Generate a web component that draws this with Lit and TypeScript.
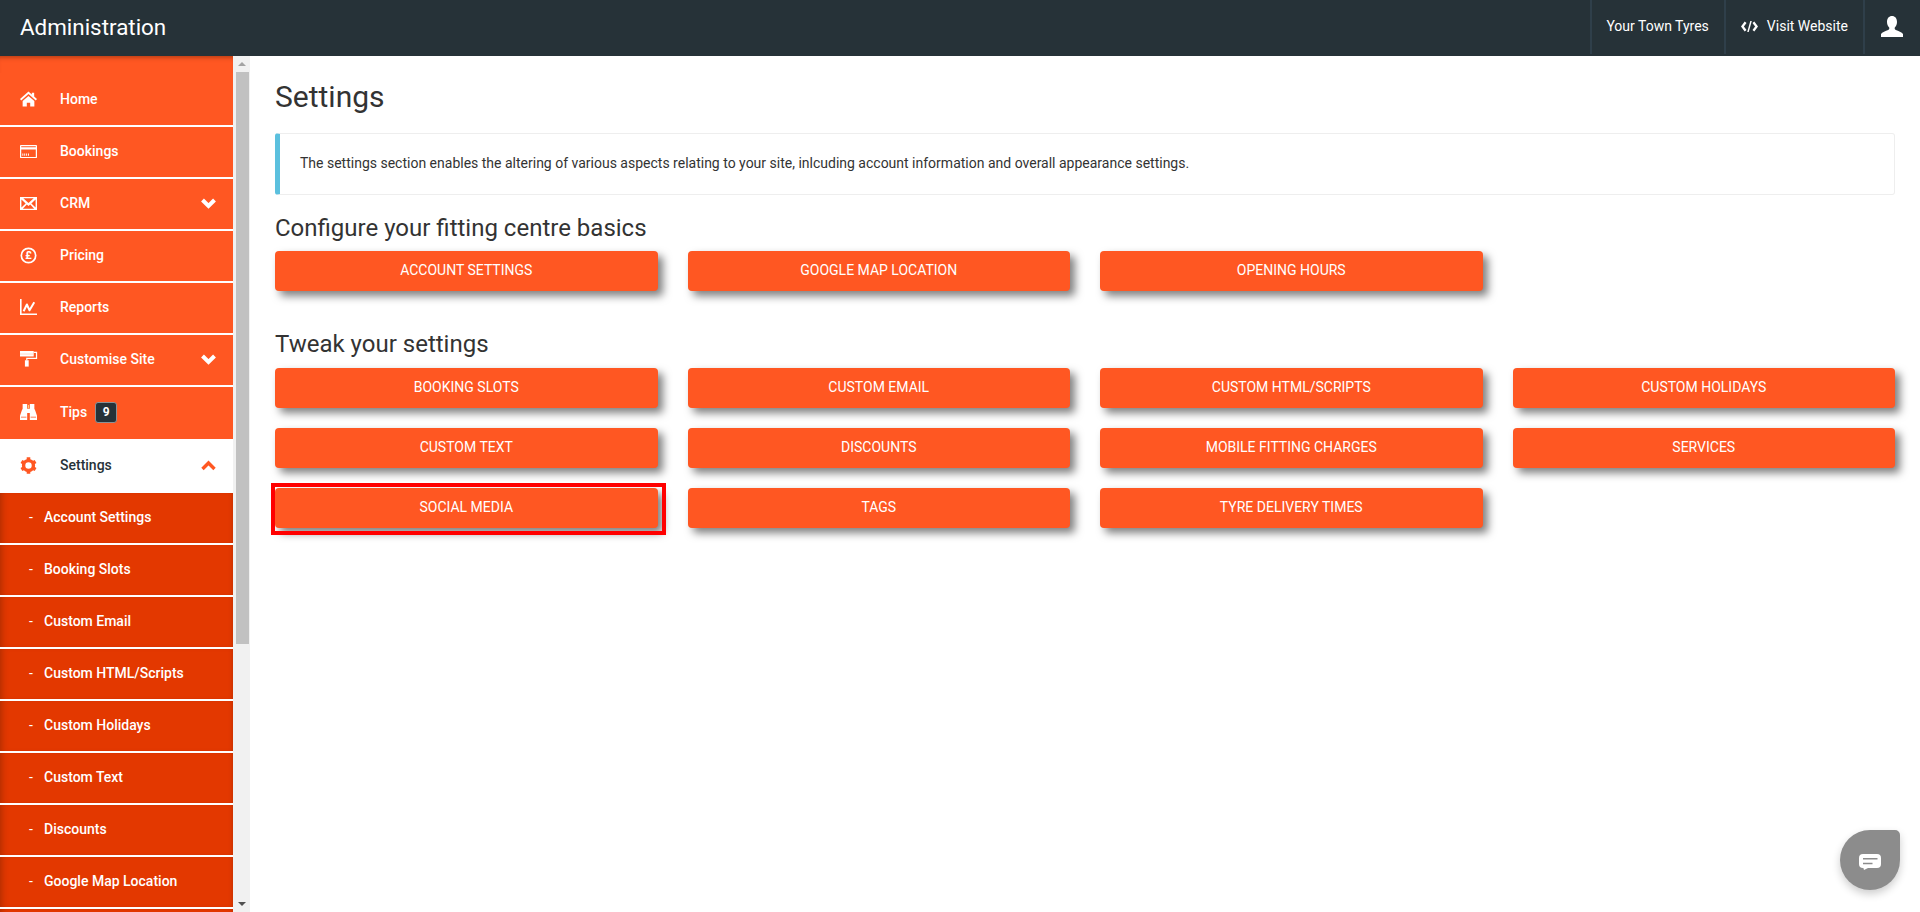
import { LitElement, html, css, svg } from "lit";
import { customElement } from "lit/decorators.js";

const O = "#ff5722";
const icons: Record<string, unknown> = {
  home: svg`<path d="M9 .500 0 8.600l1.300 1.500L9 3.300l7.700 6.800L18 8.600l-3-2.700V1.800h-2.500v1.900zM2.800 10.700v5.800h4.400v-4h3.600v4h4.400v-5.800L9 5.200z"/>`,
  card: svg`<path fill-rule="evenodd" d="M1 2h16a1 1 0 0 1 1 1v12a1 1 0 0 1-1 1H1a1 1 0 0 1-1-1V3a1 1 0 0 1 1-1zm.300 1.400v1.200h15.400V3.400zm0 3.400v7.900h15.400V6.800zM2.500 11h1v2.400h-1zm2 0h1v2.400h-1zm2 0h1v2.400h-1zm2 0h1v2.400h-1z"/>`,
  mail: svg`<path fill-rule="evenodd" d="M0 2h18v14H0zM3.500 3.500 9 8.400l5.500-4.900zM1.500 4.800v8.400L6 9zm15 0L12 9l4.500 4.200zM7.200 10.100 3 14.500h12l-4.200-4.400L9 11.700z"/>`,
  pound: svg`<circle cx="9" cy="9" r="7.600" fill="none" stroke="#fff" stroke-width="1.800"/><text x="9" y="13.200" text-anchor="middle" font-size="11.500" font-weight="700" font-family="Roboto, sans-serif" fill="#fff">£</text>`,
  chart: svg`<path d="M0 0h1.700v15.300H18V17H0z"/><path d="M3.800 13 7.300 5.800l2.800 6.200 5-8.500" fill="none" stroke="#fff" stroke-width="2.100" stroke-linejoin="round"/>`,
  roller: svg`<path d="M0 0h14.500v5.800H0z"/><path d="M0 2.800h14.500v.8H0z" fill="#ffc9b5"/><path d="M14.500 1.500H17.500V7.800H7.200V10" fill="none" stroke="#fff" stroke-width="1.300"/><path d="M5.200 9.800h4V16.500h-4z"/>`,
  bino: svg`<path d="M2.800 0H7.600V5H10.400V0h4.800v5l.9 2 1.900 5.500V17H10.400V9.500H7.600V17H0v-4.500L1.900 7l.9-2z"/><path fill="${O}" d="M1 13.400h5.800v.8H1zM11.200 13.400H17v.8h-5.800z"/><path fill="#ffd27a" d="M8.400 1h1.200v3.600H8.400z"/>`,
  cog: svg`<circle cx="9" cy="9" r="5.200" fill="none" stroke="${O}" stroke-width="3.600"/><g stroke="${O}" stroke-width="3.800"><path d="M9 .300v3M9 14.700v3M1.500 4.700l2.600 1.500M13.900 11.800l2.600 1.500M1.500 13.300l2.600-1.500M13.900 6.200l2.600-1.500"/></g>`,
};

interface Item { label: string; icon: string; chevron?: "down" | "up"; badge?: string; active?: boolean }

const NAV: Item[] = [
  { label: "Home", icon: "home" },
  { label: "Bookings", icon: "card" },
  { label: "CRM", icon: "mail", chevron: "down" },
  { label: "Pricing", icon: "pound" },
  { label: "Reports", icon: "chart" },
  { label: "Customise Site", icon: "roller", chevron: "down" },
  { label: "Tips", icon: "bino", badge: "9" },
  { label: "Settings", icon: "cog", chevron: "up", active: true },
];
const SUB = ["Account Settings", "Booking Slots", "Custom Email", "Custom HTML/Scripts", "Custom Holidays", "Custom Text", "Discounts", "Google Map Location"];
const BASICS = ["ACCOUNT SETTINGS", "GOOGLE MAP LOCATION", "OPENING HOURS"];
const TWEAKS = ["BOOKING SLOTS", "CUSTOM EMAIL", "CUSTOM HTML/SCRIPTS", "CUSTOM HOLIDAYS", "CUSTOM TEXT", "DISCOUNTS", "MOBILE FITTING CHARGES", "SERVICES", "SOCIAL MEDIA", "TAGS", "TYRE DELIVERY TIMES"];

@customElement("app-root")
export class AppRoot extends LitElement {
  static styles = css`
    :host { display: block; height: 912px; overflow: hidden; font-family: Roboto, "Liberation Sans", sans-serif; background: #fff; position: relative; }
    .top { height: 56px; background: #263238; color: #fff; display: flex; align-items: stretch; position: relative; z-index: 2; }
    .brand { flex: 1; padding-left: 20px; font-size: 22.400px; line-height: 54px; }
    .tlink { display: flex; align-items: center; gap: 9px; padding: 0 15px 2px 15px; box-sizing: border-box; font-size: 14px; font-weight: 400; border-left: 2px solid #2f3f4a; color: #fff; height: 54px; }
    .tlink.shop { padding-left: 14px; }
    .tlink svg { fill: #fff; display: block; flex: none; }
    .tuser { padding: 0 16px 0 15px; }
    .body { display: flex; height: 856px; }
    .sidewrap { width: 250px; flex: none; display: flex; overflow: hidden; }
    .side { width: 233px; flex: none; background: #fff; overflow: hidden; position: relative; }
    .side::before { content: ""; display: block; height: 17px; background: #ff5722; box-shadow: inset 0 5px 5px -4px rgba(90, 30, 0, .55); }
    .nav { display: flex; align-items: center; height: 50px; box-sizing: border-box; padding: 0 0 2px 20px; background: #ff5722; color: #fff; font-size: 14px; font-weight: 500; margin-bottom: 2px; position: relative; }
    .nav.first { height: 52px; padding-bottom: 0; }
    .nav.tips { height: 52px; margin-bottom: 0; }
    .nav.active { background: #fff; color: #263238; height: 54px; margin-bottom: 0; }
    .nav svg.ic { width: 17px; height: 17px; fill: #fff; flex: none; margin-right: 23px; display: block; overflow: visible; }
    .chev { position: absolute; right: 17px; top: 50%; margin-top: -7px; width: 15px; height: 12px; fill: none; stroke: #fff; stroke-width: 4; }
    .nav.active .chev { stroke: #ff5722; margin-top: -6px; stroke-width: 3.400; }
    .badge { margin-left: 8px; width: 22px; height: 21px; box-sizing: border-box; border: 1px solid #8a9296; border-radius: 3px; background: #263238; color: #fff; font-size: 12px; font-weight: 700; display: flex; align-items: center; justify-content: center; }
    .sub { display: flex; align-items: center; height: 50px; box-sizing: border-box; padding: 0 0 2px 29px; background: #e33800; color: #fff; font-size: 14px; font-weight: 500; margin-bottom: 2px; box-shadow: inset 6px 0 6px -4px rgba(90, 30, 0, .35), inset -4px 0 4px -4px rgba(90, 30, 0, .3); }
    .sub span { width: 15px; flex: none; font-weight: 400; }
    .scroll { width: 17px; flex: none; background: #f1f1f1; display: flex; flex-direction: column; align-items: center; }
    .scroll .arrow { height: 16px; width: 17px; flex: none; display: flex; align-items: center; justify-content: center; }
    .scroll .arrow i { display: block; width: 0; height: 0; border-left: 4px solid transparent; border-right: 4px solid transparent; }
    .scroll .up i { border-bottom: 4px solid #a3a3a3; }
    .scroll .down { margin-top: auto; }
    .scroll .down i { border-top: 4px solid #505050; }
    .thumb { width: 13px; height: 572px; background: #c1c1c1; margin-left: 1px; flex: none; }
    main { flex: 1; padding: 0 25px; min-width: 0; }
    h1 { font-size: 30px; font-weight: 400; color: #333; margin: 0; padding-top: 23px; line-height: 36px; }
    .callout { margin-top: 18px; height: 62px; box-sizing: border-box; border: 1px solid #eee; border-left: 5px solid #5bc0de; border-radius: 3px; padding: 0 20px 2px; display: flex; align-items: center; font-size: 14px; color: #333; }
    h3 { font-size: 24px; font-weight: 400; color: #333; margin: 0; line-height: 26px; }
    h3.a { margin-top: 20px; }
    h3.b { margin-top: 40px; }
    .grid { display: grid; grid-template-columns: repeat(4, 1fr); gap: 20px 30px; margin-top: 10px; }
    .grid.b { margin-top: 11px; }
    .btn { height: 40px; box-sizing: border-box; padding-bottom: 2px; background: #ff5722; border-radius: 4px; color: #fff; font-size: 14px; font-weight: 400; display: flex; align-items: center; justify-content: center; box-shadow: 5px 5px 9px rgba(0, 0, 0, .5); position: relative; }
    .btn.mark::after { content: ""; position: absolute; left: -4px; top: -5px; width: 395px; height: 52px; box-sizing: border-box; border: 4px solid #f00; }
    .chat { position: absolute; left: 1840px; top: 830px; width: 60px; height: 60px; box-sizing: border-box; padding-top: 3px; border-radius: 50% 5px 50% 50%; background: #8c8c8c; box-shadow: 0 4px 8px rgba(0,0,0,.2); display: flex; align-items: center; justify-content: center; z-index: 3; }
  `;

  private icon(name: string) {
    return html`<svg class="ic" viewBox="0 0 18 18">${icons[name]}</svg>`;
  }

  render() {
    return html`
      <div class="top">
        <div class="brand">Administration</div>
        <div class="tlink shop">Your Town Tyres</div>
        <div class="tlink">
          <svg width="17" height="11" viewBox="0 0 17 11"><path d="M4.600 1.200 1.400 5.500l3.200 4.300M12.400 1.200l3.200 4.300-3.200 4.300" fill="none" stroke="#fff" stroke-width="2.300"/><path d="M9.300 0h1.500L7.700 11H6.200z"/></svg>
          Visit Website
        </div>
        <div class="tlink tuser">
          <svg width="24" height="24" viewBox="0 0 24 24"><path d="M12 1c3 0 5 2.300 5 6 0 2.500-1 4.500-2.200 5.600-.3 1.100 0 1.800 1 2.300 2.500 1.100 6.200 2.100 7.200 4.100v3H1v-3c1-2 4.700-3 7.200-4.100 1-.5 1.300-1.200 1-2.300C8 11.500 7 9.500 7 7c0-3.700 2-6 5-6z"/></svg>
        </div>
      </div>
      <div class="body">
        <div class="sidewrap">
          <div class="side">
            ${NAV.map((n, i) => html`
              <div class="nav ${i === 0 ? "first" : ""} ${n.badge ? "tips" : ""} ${n.active ? "active" : ""}">
                ${this.icon(n.icon)}${n.label}
                ${n.badge ? html`<span class="badge">${n.badge}</span>` : ""}
                ${n.chevron ? html`<svg class="chev" viewBox="0 0 15 12"><path d="${n.chevron === "down" ? "M1.500 3l6 6 6-6" : "M1.500 9l6-6 6 6"}"/></svg>` : ""}
              </div>`)}
            ${SUB.map((s) => html`<div class="sub"><span>-</span>${s}</div>`)}
            <div class="sub"></div>
          </div>
          <div class="scroll">
            <div class="arrow up"><i></i></div>
            <div class="thumb"></div>
            <div class="arrow down"><i></i></div>
          </div>
        </div>
        <main>
          <h1>Settings</h1>
          <div class="callout">The settings section enables the altering of various aspects relating to your site, inlcuding account information and overall appearance settings.</div>
          <h3 class="a">Configure your fitting centre basics</h3>
          <div class="grid">${BASICS.map((b) => html`<div class="btn">${b}</div>`)}</div>
          <h3 class="b">Tweak your settings</h3>
          <div class="grid b">${TWEAKS.map((b) => html`<div class="btn ${b === "SOCIAL MEDIA" ? "mark" : ""}">${b}</div>`)}</div>
        </main>
      </div>
      <div class="chat">
        <svg width="22" height="16" viewBox="0 0 22 16"><path d="M4 0h14a4 4 0 0 1 4 4v6a4 4 0 0 1-4 4H9l-4 2-.600-2H4a4 4 0 0 1-4-4V4a4 4 0 0 1 4-4z" fill="#fff"/><path d="M4 4.700h14.500M4 9.500h9.500" stroke="#8c8c8c" stroke-width="1.600"/></svg>
      </div>
    `;
  }
}
